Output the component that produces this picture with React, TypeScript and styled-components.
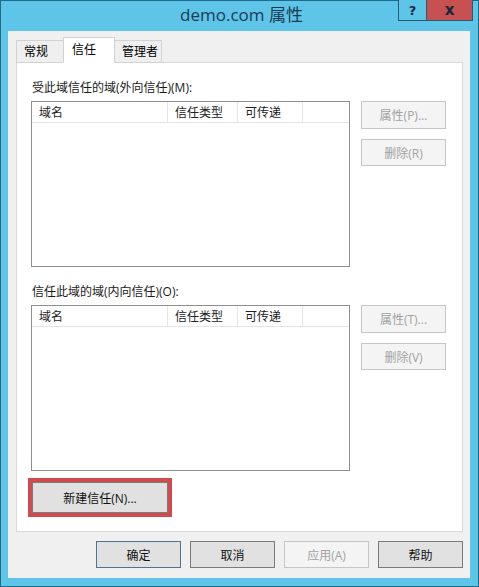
import React from "react";
import styled, { createGlobalStyle } from "styled-components";

const Global = createGlobalStyle`
  html, body { margin: 0; padding: 0; background: #ffffff; }
  * { box-sizing: border-box; }
  body {
    font-family: "Open Sans", "Noto Sans", "Noto Sans CJK SC", sans-serif;
    font-size: 12px;
    color: #000;
  }
`;

const Frame = styled.div`
  width: 479px;
  height: 587px;
  background: #5ec5e9;
  border: 1px solid #1f6a88;
  display: flex;
  flex-direction: column;
`;

const TitleBar = styled.div`
  height: 30px;
  display: grid;
  grid-template-columns: 1fr auto 1fr;
  align-items: start;
`;

const Title = styled.div`
  grid-column: 2;
  font-family: "Open Sans", "Noto Sans CJK SC", sans-serif;
  font-size: 17px;
  line-height: 28px;
  color: #1b3b52;
  padding-left: 4px;
`;

const Controls = styled.div`
  grid-column: 3;
  justify-self: end;
  display: flex;
  margin-right: 5px;
  margin-top: -1px;
`;

const CtrlButton = styled.div<{ $close?: boolean }>`
  width: ${(p) => (p.$close ? "46px" : "29px")};
  height: 21px;
  background: ${(p) => (p.$close ? "#c75050" : "#5ec5e9")};
  border: 1px solid #2b5a74;
  border-top: none;
  ${(p) => (p.$close ? "border-left: none;" : "")}
  display: flex;
  align-items: center;
  justify-content: center;
  font-family: "DejaVu Sans", sans-serif;
  font-weight: bold;
  font-size: ${(p) => (p.$close ? "15px" : "13px")};
  color: #14283a;
`;

const Client = styled.div`
  flex: 1;
  margin: 0 8px 8px 7px;
  background: #f0f0f0;
  padding: 7px 7px 10px 8px;
  display: flex;
  flex-direction: column;
`;

const TabStrip = styled.div`
  height: 25px;
  display: flex;
  align-items: flex-end;
  position: relative;
  z-index: 1;
  margin-bottom: -1px;
`;

const Tab = styled.div<{ $active?: boolean; $w: number }>`
  width: ${(p) => p.$w}px;
  height: ${(p) => (p.$active ? "26px" : "23px")};
  background: ${(p) => (p.$active ? "#ffffff" : "#efefef")};
  border: 1px solid #d2d2d2;
  border-bottom: ${(p) => (p.$active ? "1px solid #ffffff" : "1px solid #d2d2d2")};
  ${(p) => (p.$active ? "" : "")}
  margin-left: -1px;
  padding-left: ${(p) => (p.$active ? "8px" : "7px")};
  font-family: "Noto Sans CJK SC", sans-serif;
  font-size: 12px;
  line-height: ${(p) => (p.$active ? "22px" : "20px")};
  &:first-child { margin-left: 0; }
`;

const Panel = styled.div`
  flex: 1;
  background: #ffffff;
  border: 1px solid #d9d9d9;
  padding: 17px 16px 0 14px;
  display: flex;
  flex-direction: column;
`;

const SectionLabel = styled.div<{ $top: number }>`
  margin-top: ${(p) => p.$top}px;
  padding-left: 1px;
  height: 16px;
  line-height: 16px;
  font-family: "Open Sans", "Noto Sans CJK SC", sans-serif;
  font-size: 12px;
  color: #1a1a1a;
`;

const ListRow = styled.div`
  margin-top: 5px;
  display: flex;
  gap: 11px;
  align-items: flex-start;
`;

const ListBox = styled.div`
  width: 319px;
  height: 166px;
  border: 1px solid #8e8e8e;
  background: #ffffff;
`;

const HeaderRow = styled.div`
  display: flex;
  height: 21px;
  border-bottom: 1px solid #e5e5e5;
`;

const HeaderCell = styled.div<{ $w: number }>`
  width: ${(p) => p.$w}px;
  border-right: 1px solid #e5e5e5;
  padding-left: 7px;
  line-height: 20px;
  font-family: "Noto Sans CJK SC", sans-serif;
  font-size: 12px;
  color: #222;
`;

const SideButtons = styled.div`
  display: flex;
  flex-direction: column;
  gap: 10px;
`;

const Button = styled.div<{ $disabled?: boolean; $default?: boolean; $w?: number; $h?: number }>`
  width: ${(p) => p.$w ?? 85}px;
  height: ${(p) => p.$h ?? 27}px;
  display: flex;
  align-items: center;
  justify-content: center;
  background: ${(p) => (p.$disabled ? "#f4f4f4" : "#e1e1e1")};
  border: 1px solid
    ${(p) => (p.$disabled ? "#c6c6c6" : p.$default ? "#4f7396" : "#7a7a7a")};
  color: ${(p) => (p.$disabled ? "#a2a2a2" : "#111")};
  font-family: "Open Sans", "Noto Sans CJK SC", sans-serif;
  font-size: 12px;
`;

const Highlight = styled.div`
  margin-top: 7px;
  margin-left: -3px;
  width: 144px;
  height: 39px;
  border: 4px solid #d14a4d;
  display: flex;
`;

const BottomBar = styled.div`
  margin-top: 9px;
  display: flex;
  justify-content: flex-end;
  gap: 9px;
`;

function TrustList() {
  return (
    <ListBox>
      <HeaderRow>
        <HeaderCell $w={136}>域名</HeaderCell>
        <HeaderCell $w={70}>信任类型</HeaderCell>
        <HeaderCell $w={65}>可传递</HeaderCell>
      </HeaderRow>
    </ListBox>
  );
}

export default function App() {
  return (
    <>
      <Global />
      <Frame>
        <TitleBar>
          <Title>demo.com 属性</Title>
          <Controls>
            <CtrlButton>?</CtrlButton>
            <CtrlButton $close>x</CtrlButton>
          </Controls>
        </TitleBar>
        <Client>
          <TabStrip>
            <Tab $w={48}>常规</Tab>
            <Tab $w={52} $active>
              信任
            </Tab>
            <Tab $w={48}>管理者</Tab>
          </TabStrip>
          <Panel>
            <SectionLabel $top={0}>受此域信任的域(外向信任)(M):</SectionLabel>
            <ListRow>
              <TrustList />
              <SideButtons>
                <Button $disabled $h={28}>属性(P)...</Button>
                <Button $disabled>删除(R)</Button>
              </SideButtons>
            </ListRow>
            <SectionLabel $top={17}>信任此域的域(内向信任)(O):</SectionLabel>
            <ListRow>
              <TrustList />
              <SideButtons>
                <Button $disabled $h={28}>属性(T)...</Button>
                <Button $disabled>删除(V)</Button>
              </SideButtons>
            </ListRow>
            <Highlight>
              <Button $w={136} $h={31}>新建信任(N)...</Button>
            </Highlight>
          </Panel>
          <BottomBar>
            <Button $default>确定</Button>
            <Button>取消</Button>
            <Button $disabled>应用(A)</Button>
            <Button>帮助</Button>
          </BottomBar>
        </Client>
      </Frame>
    </>
  );
}
